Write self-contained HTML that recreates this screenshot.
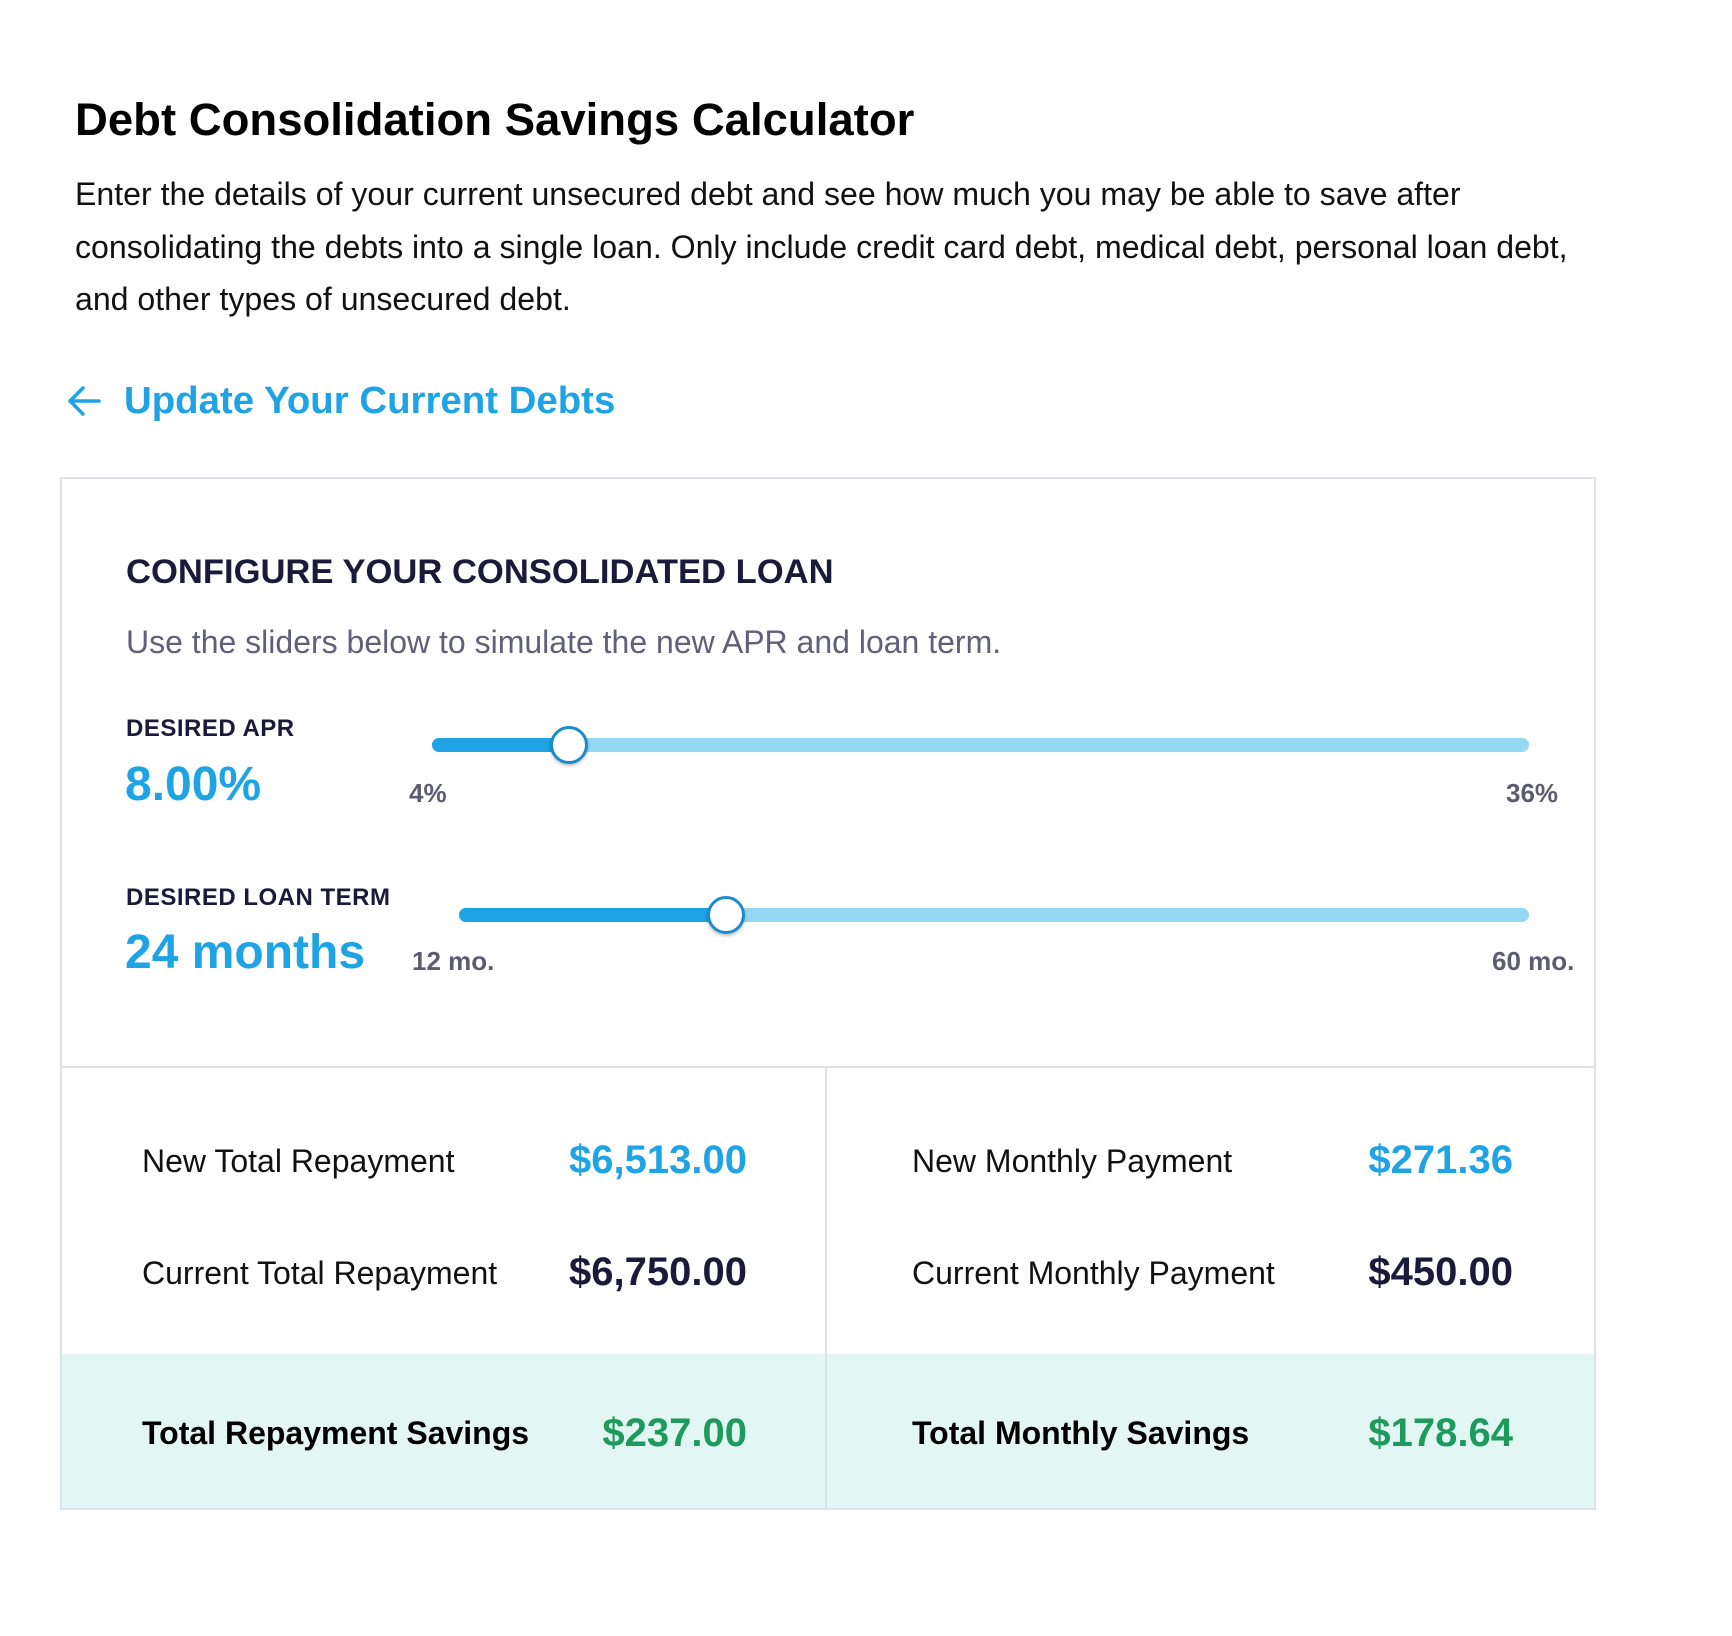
<!DOCTYPE html>
<html><head><meta charset="utf-8"><style>
*{margin:0;padding:0;box-sizing:border-box}
body{width:1732px;height:1636px;background:#fff;font-family:"Liberation Sans",Arial,sans-serif;position:relative;overflow:hidden}
.a{position:absolute;white-space:nowrap;line-height:1}
h1{position:absolute;left:75px;top:97px;font-size:45.5px;font-weight:bold;color:#000;line-height:1}
.p{position:absolute;left:75px;top:168px;font-size:32.1px;line-height:52.5px;color:#111;width:1620px}
.card{position:absolute;left:60px;top:477px;width:1536px;height:1033px;border:2px solid #e0e0ea}
.track{position:absolute;height:14px;border-radius:7px;background:#95d8f3}
.fill{position:absolute;left:0;top:0;height:14px;border-radius:7px;background:#1ea4e4}
.thumb{position:absolute;width:38px;height:38px;border-radius:50%;background:#fff;border:3px solid #1a8ccc;box-shadow:0 2px 3px rgba(0,0,0,.25)}
.lbl{font-size:32px;color:#111}
.val{font-size:40px;font-weight:bold;text-align:right}
</style></head><body>
<h1>Debt Consolidation Savings Calculator</h1>
<div class="p">Enter the details of your current unsecured debt and see how much you may be able to save after<br>consolidating the debts into a single loan. Only include credit card debt, medical debt, personal loan debt,<br>and other types of unsecured debt.</div>
<svg style="position:absolute;left:66px;top:384px" width="36" height="34" viewBox="0 0 36 34"><path d="M33 17H4M17 4L4 17l13 13" fill="none" stroke="#1ea4e4" stroke-width="3.5" stroke-linecap="round" stroke-linejoin="round"/></svg>
<div class="a" style="left:124px;top:382px;font-size:38.4px;font-weight:bold;color:#1ea4e4">Update Your Current Debts</div>
<div class="card">
<div style="position:absolute;left:0;right:0;top:587px;border-top:2px solid #e0e0ea"></div>
<div style="position:absolute;left:763px;top:587px;bottom:0;border-left:2px solid #e0e0ea"></div>
<div style="position:absolute;left:0;right:0;top:875px;bottom:0;background:#e2f7f3"></div>
<div style="position:absolute;left:763px;top:875px;bottom:0;border-left:2px solid #e0e0ea"></div>
</div>
<div class="a" style="left:126px;top:555px;font-size:34.6px;font-weight:bold;color:#1a1a3a">CONFIGURE YOUR CONSOLIDATED LOAN</div>
<div class="a" style="left:126px;top:626px;font-size:32px;color:#60607a">Use the sliders below to simulate the new APR and loan term.</div>
<div class="a" style="left:126px;top:717px;font-size:24px;font-weight:bold;color:#1a1a3a;letter-spacing:.5px">DESIRED APR</div>
<div class="a" style="left:125px;top:761px;font-size:48px;font-weight:bold;color:#1ea4e4">8.00%</div>
<div class="track" style="left:432px;top:738px;width:1097px"><div class="fill" style="width:140px"></div></div>
<div class="thumb" style="left:550px;top:726px"></div>
<div class="a" style="left:409px;top:780px;font-size:26px;font-weight:bold;color:#5c5c70">4%</div>
<div class="a" style="left:1506px;top:780px;font-size:26px;font-weight:bold;color:#5c5c70">36%</div>
<div class="a" style="left:126px;top:886px;font-size:24px;font-weight:bold;color:#1a1a3a;letter-spacing:.5px">DESIRED LOAN TERM</div>
<div class="a" style="left:125px;top:929px;font-size:48px;font-weight:bold;color:#1ea4e4">24 months</div>
<div class="track" style="left:459px;top:908px;width:1070px"><div class="fill" style="width:270px"></div></div>
<div class="thumb" style="left:707px;top:896px"></div>
<div class="a" style="left:412px;top:948px;font-size:26px;font-weight:bold;color:#5c5c70">12 mo.</div>
<div class="a" style="left:1492px;top:948px;font-size:26px;font-weight:bold;color:#5c5c70">60 mo.</div>

<div class="a lbl" style="left:142px;top:1145px">New Total Repayment</div>
<div class="a val" style="right:985px;top:1140px;color:#1ea4e4">$6,513.00</div>
<div class="a lbl" style="left:142px;top:1257px">Current Total Repayment</div>
<div class="a val" style="right:985px;top:1252px;color:#1a1a3a">$6,750.00</div>
<div class="a lbl" style="left:142px;top:1417px;font-weight:bold;color:#000">Total Repayment Savings</div>
<div class="a val" style="right:985px;top:1413px;color:#1e9a5e">$237.00</div>

<div class="a lbl" style="left:912px;top:1145px">New Monthly Payment</div>
<div class="a val" style="right:219px;top:1140px;color:#1ea4e4">$271.36</div>
<div class="a lbl" style="left:912px;top:1257px">Current Monthly Payment</div>
<div class="a val" style="right:219px;top:1252px;color:#1a1a3a">$450.00</div>
<div class="a lbl" style="left:912px;top:1417px;font-weight:bold;color:#000">Total Monthly Savings</div>
<div class="a val" style="right:219px;top:1413px;color:#1e9a5e">$178.64</div>
</body></html>
